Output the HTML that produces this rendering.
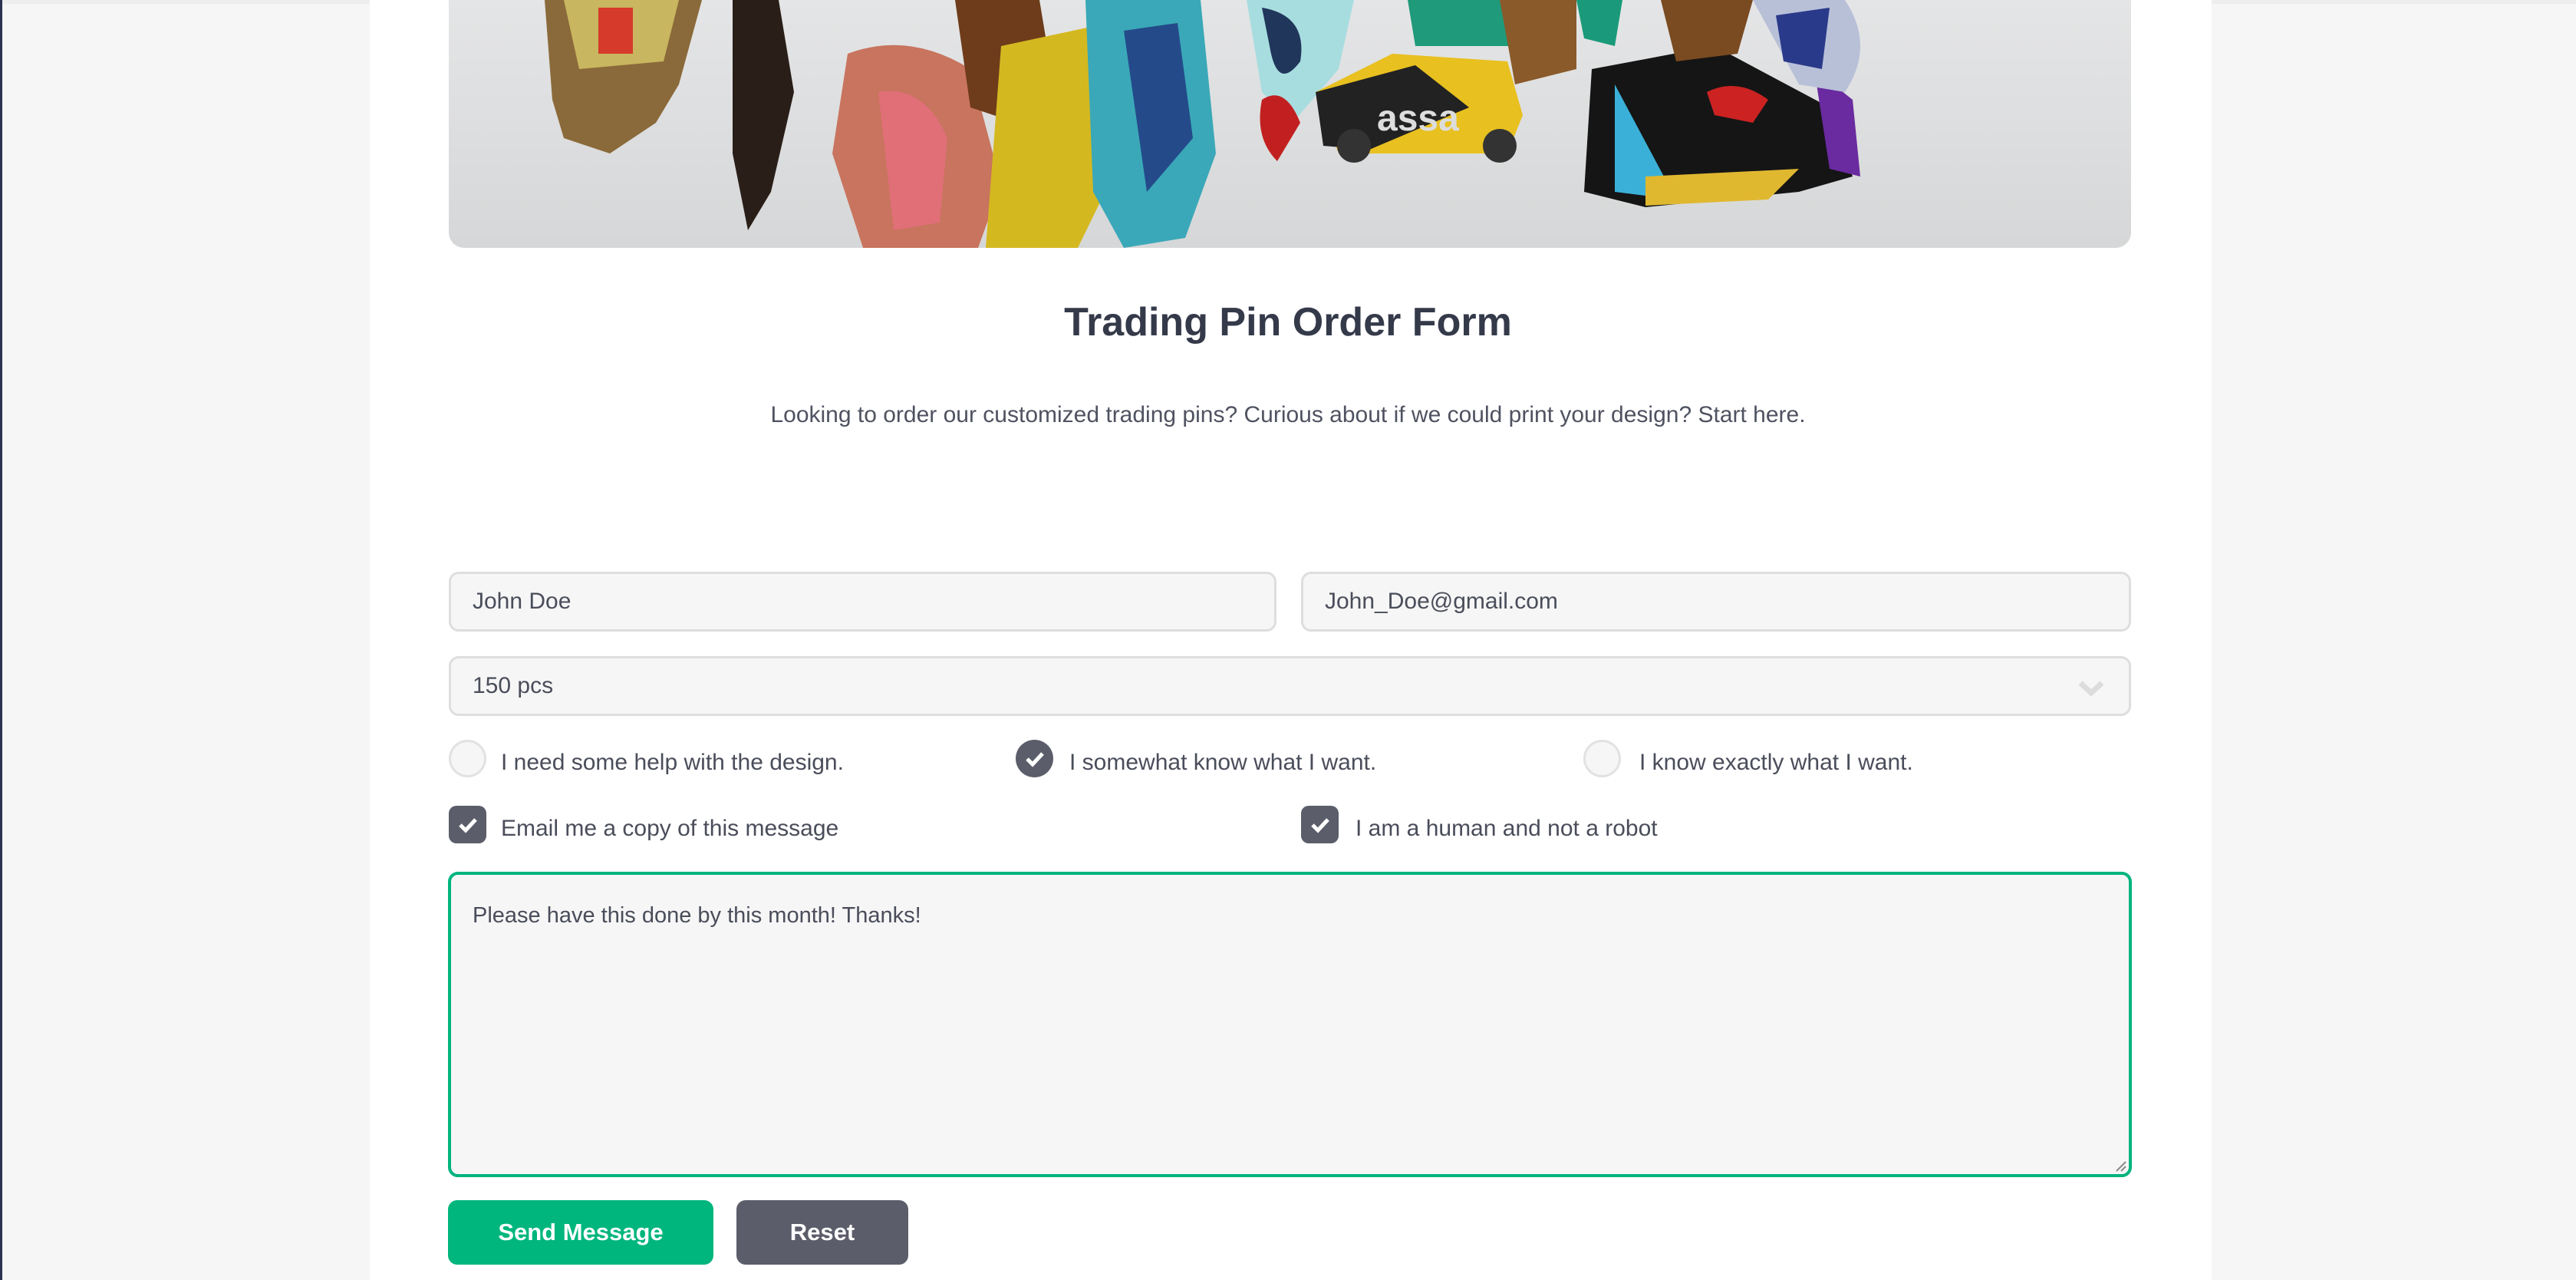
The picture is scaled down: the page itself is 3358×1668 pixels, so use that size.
<!DOCTYPE html>
<html><head><meta charset="utf-8"><style>
*{box-sizing:border-box;margin:0;padding:0}
html,body{width:3358px;height:1668px;overflow:hidden}
body{background:#f6f6f6;font-family:"Liberation Sans",sans-serif;position:relative;color:#4a4d5a}
.lb{position:absolute;left:0;top:0;width:3px;height:1668px;background:#2b3350}
.tb{position:absolute;left:0;top:0;width:3358px;height:5px;background:#eeeeee}
.col{position:absolute;left:482px;top:0;width:2401px;height:1668px;background:#fff}
.img{position:absolute;left:585px;top:0;width:2193px;height:323px;border-radius:0 0 20px 20px;overflow:hidden;background:linear-gradient(180deg,#e4e5e6,#d6d7d8)}
.abs{position:absolute}
h1{position:absolute;left:0;width:3358px;top:390px;text-align:center;font-size:52px;font-weight:bold;color:#353a4a}
.sub{position:absolute;left:0;width:3358px;top:524px;text-align:center;font-size:30px;color:#4f5260}
.in{position:absolute;background:#f6f6f6;border:3px solid #dedede;border-radius:13px;font-size:30px;color:#4a4d5a;padding-left:28px;display:flex;align-items:center}
.lab{position:absolute;font-size:30px;color:#4a4d5a;line-height:36px}
.rad{position:absolute;width:49px;height:49px;border-radius:50%;background:#f6f6f6;border:3px solid #e2e2e2}
.chk{position:absolute;width:49px;height:49px;background:#5b5d6a;display:flex;align-items:center;justify-content:center}
.btn{position:absolute;top:1564px;height:84px;border-radius:12px;color:#fff;font-weight:bold;font-size:31px;display:flex;align-items:center;justify-content:center}
</style></head><body>
<div class="tb"></div>
<div class="lb"></div>
<div class="col"></div>
<div class="img">
<svg width="2193" height="323" viewBox="0 0 2193 323">
<path d="M125 0 L330 0 L300 110 L270 160 L210 200 L150 180 L135 130 Z" fill="#8a6a3a"/>
<path d="M150 0 L300 0 L280 80 L170 90 Z" fill="#c9b660"/>
<path d="M195 10 L240 10 L240 70 L195 70Z" fill="#d63a2a"/>
<path d="M370 0 L430 0 L450 120 L420 250 L390 300 L370 200Z" fill="#2a1e18"/>
<path d="M520 70 Q600 40 680 90 L720 240 L690 323 L540 323 L500 200Z" fill="#c8745e"/>
<path d="M560 120 Q620 110 650 180 L640 290 L580 300 Z" fill="#e06f78"/>
<path d="M660 0 L770 0 L790 120 L740 160 L680 140Z" fill="#6e3c1a"/>
<path d="M720 60 L860 30 L880 200 L820 323 L700 323 Z" fill="#d4b820"/>
<path d="M830 0 L980 0 L1000 200 L960 310 L880 323 L840 250Z" fill="#3aa8b8"/>
<path d="M880 40 L950 30 L970 180 L910 250Z" fill="#244a8a"/>
<path d="M1040 0 L1180 0 L1160 90 L1100 160 L1060 120Z" fill="#a8dde0"/>
<path d="M1060 10 Q1120 20 1110 80 Q1080 120 1070 60Z" fill="#20365a"/>
<path d="M1060 130 Q1090 110 1110 160 L1080 210 Q1050 180 1060 130Z" fill="#c22020"/>
<path d="M1130 120 L1230 70 L1380 80 L1400 150 L1380 200 L1160 200 Z" fill="#e8c020"/>
<path d="M1130 120 L1260 85 L1330 140 L1200 195 L1140 190Z" fill="#222"/>
<text x="1210" y="170" font-family="Liberation Sans" font-size="48" font-weight="bold" fill="#ddd">assa</text>
<circle cx="1180" cy="190" r="22" fill="#333"/><circle cx="1370" cy="190" r="22" fill="#333"/>
<path d="M1250 0 L1450 0 L1440 60 L1260 60Z" fill="#1f9a7a"/>
<path d="M1370 0 L1470 0 L1470 90 L1390 110Z" fill="#8a5a2a"/>
<path d="M1470 0 L1530 0 L1520 60 L1480 50Z" fill="#1a9a7a"/>
<path d="M1490 90 L1650 60 L1800 140 L1830 230 L1760 250 L1560 270 L1480 250 Z" fill="#151515"/>
<path d="M1520 110 L1600 260 L1520 250Z" fill="#3ab0d8"/>
<path d="M1560 230 L1760 220 L1720 260 L1560 268Z" fill="#e0b830"/>
<path d="M1640 120 Q1680 100 1720 130 L1700 160 L1650 150Z" fill="#cc2222"/>
<path d="M1780 90 L1830 130 L1840 230 L1800 220Z" fill="#6a2aa0"/>
<path d="M1580 0 L1700 0 L1680 70 L1600 80Z" fill="#7a4a20"/>
<path d="M1700 0 L1820 0 Q1860 60 1820 120 L1760 110 Z" fill="#b8c0d8"/>
<path d="M1730 20 L1800 10 L1790 90 L1740 80Z" fill="#2a3a8a"/>
</svg>
</div>
<h1>Trading Pin Order Form</h1>
<div class="sub">Looking to order our customized trading pins? Curious about if we could print your design? Start here.</div>

<div class="in" style="left:585px;top:745px;width:1079px;height:78px">John Doe</div>
<div class="in" style="left:1696px;top:745px;width:1082px;height:78px">John_Doe@gmail.com</div>
<div class="in" style="left:585px;top:855px;width:2193px;height:78px">150 pcs
<svg class="abs" style="left:2120px;top:28px" width="36" height="24" viewBox="0 0 36 24"><path d="M4 4 L18 17 L32 4" stroke="#dcdcdc" stroke-width="7" fill="none"/></svg></div>

<div class="rad" style="left:585px;top:964px"></div>
<div class="lab" style="left:653px;top:976px">I need some help with the design.</div>
<div class="chk" style="left:1324px;top:964px;border-radius:50%"><svg width="26" height="22" viewBox="0 0 26 22"><path d="M3 11 L10 18 L23 4" stroke="#fff" stroke-width="5" fill="none"/></svg></div>
<div class="lab" style="left:1394px;top:976px">I somewhat know what I want.</div>
<div class="rad" style="left:2064px;top:964px"></div>
<div class="lab" style="left:2137px;top:976px">I know exactly what I want.</div>

<div class="chk" style="left:585px;top:1050px;border-radius:10px"><svg width="26" height="22" viewBox="0 0 26 22"><path d="M3 11 L10 18 L23 4" stroke="#fff" stroke-width="5" fill="none"/></svg></div>
<div class="lab" style="left:653px;top:1062px">Email me a copy of this message</div>
<div class="chk" style="left:1696px;top:1050px;border-radius:10px"><svg width="26" height="22" viewBox="0 0 26 22"><path d="M3 11 L10 18 L23 4" stroke="#fff" stroke-width="5" fill="none"/></svg></div>
<div class="lab" style="left:1767px;top:1062px">I am a human and not a robot</div>

<div class="abs" style="left:584px;top:1136px;width:2195px;height:398px;background:#f6f6f6;border:4px solid #00b47e;border-radius:13px">
<div class="abs" style="left:28px;top:37px;font-size:29px;color:#4a4d5a">Please have this done by this month! Thanks!</div>
<svg class="abs" style="right:2px;bottom:2px" width="16" height="16"><path d="M2 14 L14 2 M8 14 L14 8" stroke="#888" stroke-width="2"/></svg>
</div>

<div class="btn" style="left:584px;width:346px;background:#00b67d">Send Message</div>
<div class="btn" style="left:960px;width:224px;background:#5b5d6a">Reset</div>
</body></html>
